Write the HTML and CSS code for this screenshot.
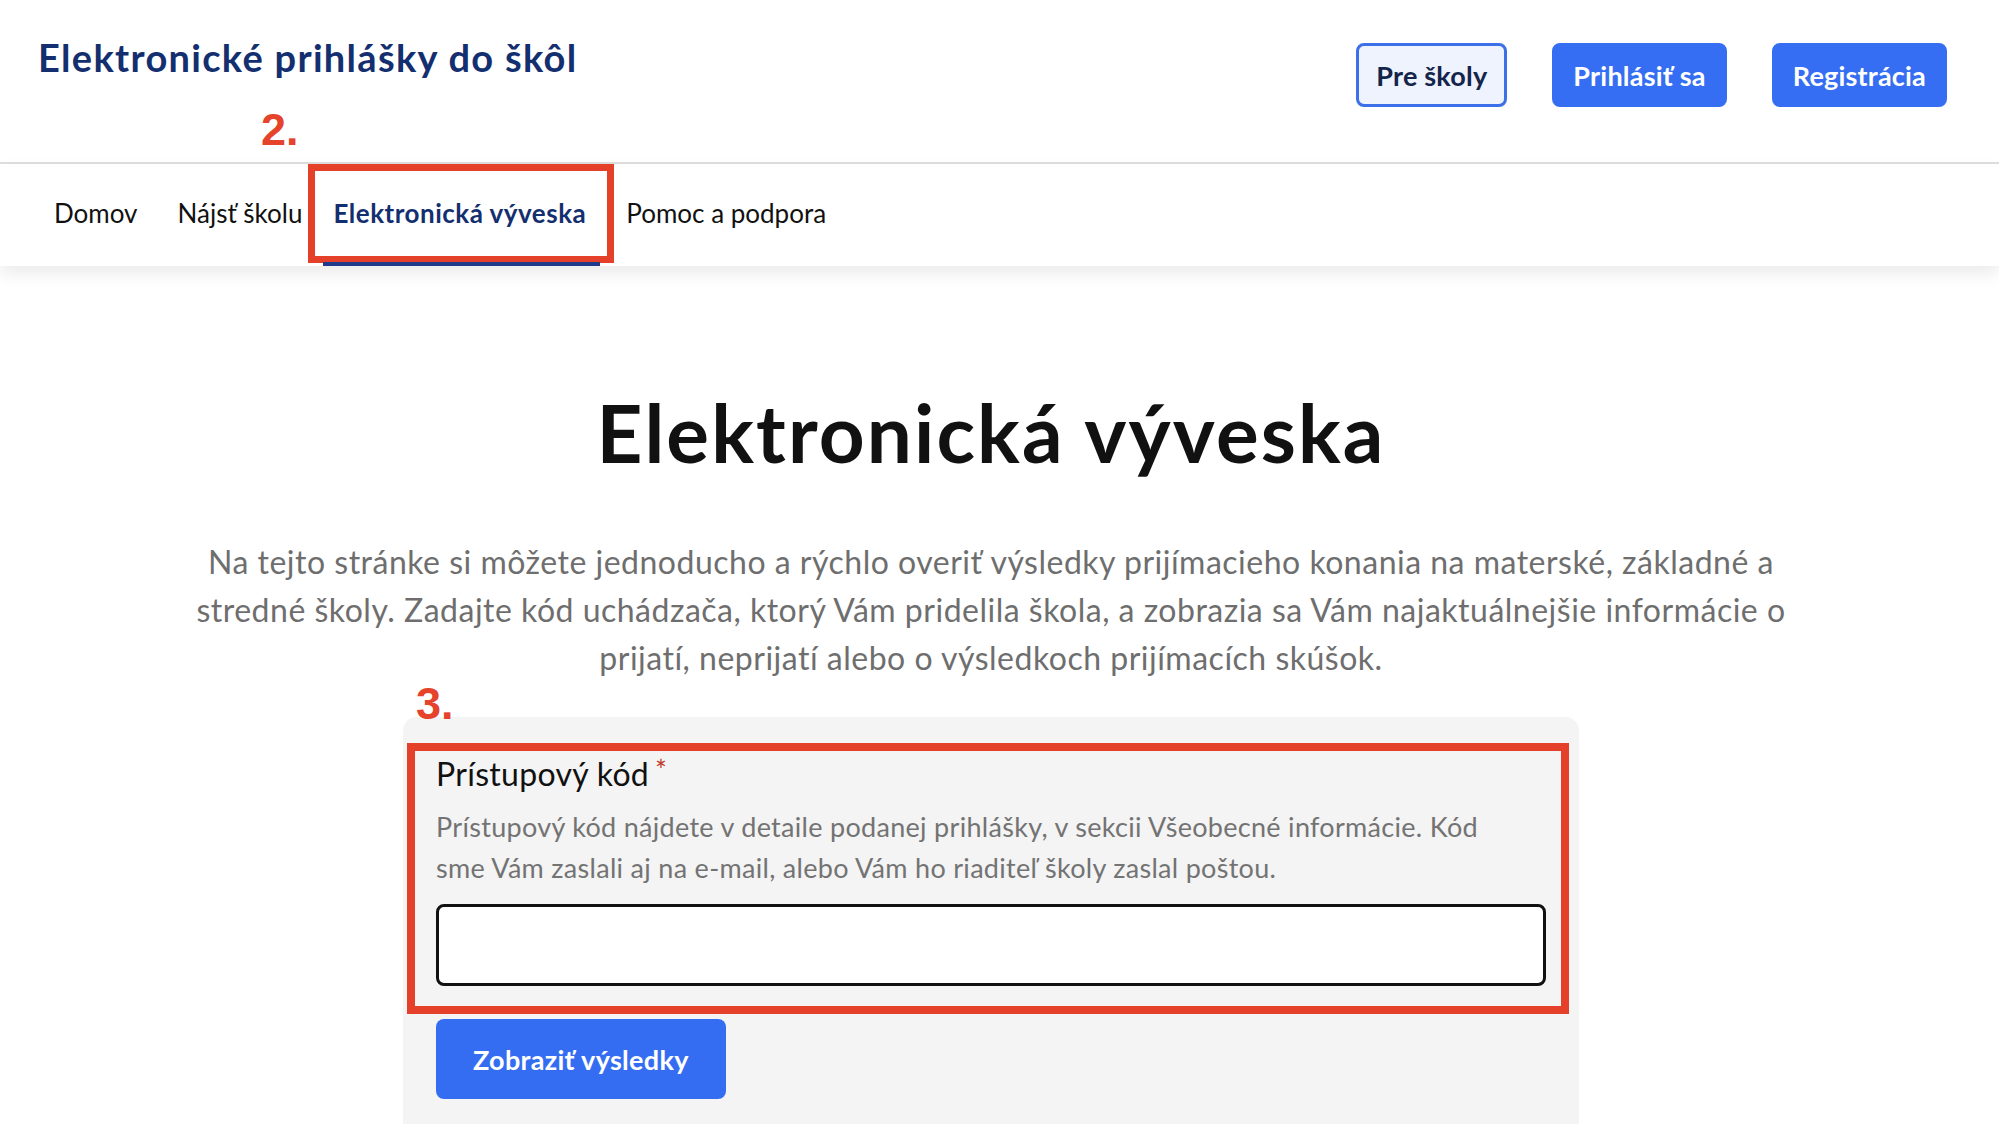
FILE: index.html
```html
<!DOCTYPE html>
<html lang="sk">
<head>
    <meta charset="UTF-8" />
    <meta name="viewport" content="width=device-width, initial-scale=1.0"/>
    <title>Elektronická výveska - Elektronické prihlášky do škôl</title>
    <link rel="stylesheet" href="styles.css">
</head>
<body>

<header class="site-header">
    <div class="brand">Elektronické prihlášky do škôl</div>
    <span class="step-mark step-2">2.</span>
    <div class="header-actions">
        <a href="#" class="btn btn-outline">Pre školy</a>
        <a href="#" class="btn btn-primary">Prihlásiť sa</a>
        <a href="#" class="btn btn-primary">Registrácia</a>
    </div>
</header>

<nav class="main-nav">
    <a href="#">Domov</a>
    <a href="#">Nájsť školu</a>
    <a href="#" class="active">Elektronická výveska<span class="highlight-box"></span></a>
    <a href="#">Pomoc a podpora</a>
</nav>

<main class="board">
    <h1 class="board-title">Elektronická výveska</h1>
    <p class="board-intro">Na tejto stránke si môžete jednoducho a rýchlo overiť výsledky prijímacieho konania na materské, základné a stredné školy. Zadajte kód uchádzača, ktorý Vám pridelila škola, a zobrazia sa Vám najaktuálnejšie informácie o prijatí, neprijatí alebo o výsledkoch prijímacích skúšok.</p>

    <form class="code-card" onsubmit="return false;">
        <span class="step-mark step-3">3.</span>
        <span class="field-box"></span>
        <div class="field">
            <label for="access-code" class="field-label">Prístupový kód<span class="required">*</span></label>
            <p class="field-hint">Prístupový kód nájdete v detaile podanej prihlášky, v sekcii Všeobecné informácie. Kód sme Vám zaslali aj na e-mail, alebo Vám ho riaditeľ školy zaslal poštou.</p>
            <input type="text" id="access-code" class="field-input">
        </div>
        <button type="submit" class="submit-btn">Zobraziť výsledky</button>
    </form>
</main>

</body>
</html>
```

FILE: styles.css
```css
* {
    box-sizing: border-box;
}

body {
    font-family: Lato, "Open Sans", sans-serif;
    margin: 0;
    padding: 0;
    background: #fff;
    color: #111;
}

.site-header {
    position: relative;
    height: 164px;
    padding: 0 52px 0 38px;
    display: flex;
    justify-content: space-between;
    align-items: flex-start;
    border-bottom: 2px solid #dedede;
}

.brand {
    margin-top: 35px;
    font-size: 38px;
    line-height: 44px;
    font-weight: 700;
    letter-spacing: 1.3px;
    color: #142f6f;
}

.header-actions {
    display: flex;
    gap: 45px;
    margin-top: 43px;
}

.btn {
    height: 64px;
    padding: 0 18px;
    display: flex;
    align-items: center;
    border-radius: 8px;
    font-size: 27px;
    font-weight: 700;
    letter-spacing: 0.2px;
    text-decoration: none;
}

.btn-outline {
    padding: 0 17px;
    background: #eef3fd;
    border: 3px solid #3b70e8;
    color: #14244a;
}

.btn-primary {
    background: #356ef2;
    border: 3px solid #356ef2;
    color: #fff;
}

.step-mark {
    position: absolute;
    font-family: "Liberation Sans", Arial, sans-serif;
    font-size: 45px;
    line-height: 45px;
    font-weight: 700;
    color: #e5432b;
}

.step-2 {
    left: 261px;
    top: 107px;
}

.step-3 {
    left: 13px;
    top: -36px;
}

.main-nav {
    position: relative;
    z-index: 1;
    height: 102px;
    padding-left: 44px;
    display: flex;
    gap: 20px;
    background: #fff;
    box-shadow: 0 8px 16px rgba(0, 0, 0, 0.08);
}

.main-nav a {
    position: relative;
    display: flex;
    align-items: center;
    padding: 0 10px 5px;
    font-size: 26px;
    color: #111;
    text-decoration: none;
}

.main-nav a.active {
    margin-left: -9px;
    font-weight: 700;
    letter-spacing: 0.5px;
    color: #142f6f;
}

.main-nav a.active::after {
    content: "";
    position: absolute;
    left: 0;
    right: -4px;
    bottom: 0;
    height: 4px;
    background: #1f3a8a;
}

.highlight-box {
    position: absolute;
    left: -15px;
    right: -18px;
    top: 0;
    bottom: 3px;
    border: 7px solid #e5402a;
}

.board {
    padding-right: 17px;
}

.board-title {
    margin: 120px 0 0;
    font-size: 80px;
    line-height: 92px;
    font-weight: 700;
    letter-spacing: 2.1px;
    text-align: center;
    color: #111;
}

.board-intro {
    max-width: 1610px;
    margin: 60px auto 0;
    font-size: 32px;
    line-height: 48px;
    letter-spacing: 0.5px;
    color: #6e6e6e;
    text-align: center;
}

.code-card {
    position: relative;
    width: 1176px;
    margin: 35px auto 0;
    padding: 37px 33px 25px;
    background: #f4f4f4;
    border-radius: 14px 14px 0 0;
}

.field-box {
    position: absolute;
    left: 4px;
    top: 26px;
    width: 1162px;
    height: 271px;
    border: 8px solid #e5402a;
    pointer-events: none;
}

.field-label {
    display: block;
    margin-bottom: 12px;
    font-size: 32px;
    line-height: 40px;
    letter-spacing: 0.3px;
    color: #111;
}

.required {
    margin-left: 6px;
    font-size: 28px;
    line-height: 32px;
    vertical-align: top;
    color: #c0392b;
}

.field-hint {
    max-width: 1080px;
    margin: 0;
    font-size: 27px;
    line-height: 41px;
    letter-spacing: 0.3px;
    color: #737373;
}

.field-input {
    display: block;
    width: 100%;
    height: 82px;
    margin-top: 16px;
    border: 3px solid #111;
    border-radius: 8px;
    background: #fff;
}

.submit-btn {
    height: 80px;
    margin-top: 33px;
    padding: 0 37px;
    border: 0;
    border-radius: 8px;
    background: #346df1;
    color: #fff;
    font-family: Lato, "Open Sans", sans-serif;
    font-size: 27px;
    font-weight: 700;
    letter-spacing: 0.3px;
}
```
